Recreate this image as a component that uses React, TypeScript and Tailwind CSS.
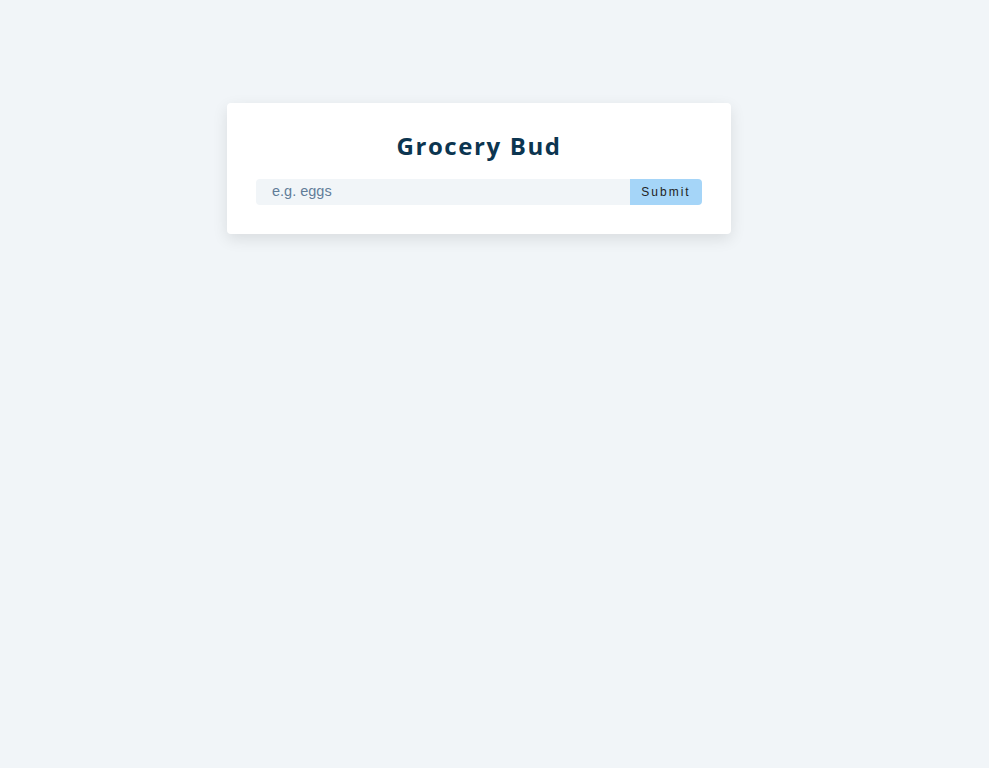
import { useState } from "react";

export default function App() {
  const [name, setName] = useState("");

  return (
    <main className="min-h-screen w-full bg-[#f1f5f8] pt-[103px]">
      <section className="ml-[227px] w-[504px] rounded bg-white px-[29px] pt-[25px] pb-[29px] shadow-[0_5px_15px_rgba(0,0,0,0.1)]">
        <form
          className="flex flex-col"
          onSubmit={(e) => {
            e.preventDefault();
          }}
        >
          <h3
            className="mb-[15px] text-center text-[24px] leading-[36px] font-bold tracking-[1.6px] text-[#0c3550]"
            style={{ fontFamily: '"Open Sans", "Noto Sans", sans-serif' }}
          >
            Grocery Bud
          </h3>
          <div className="flex h-[26px]">
            <input
              type="text"
              value={name}
              onChange={(e) => setName(e.target.value)}
              placeholder="e.g. eggs"
              className="flex-1 rounded-l bg-[#f1f5f8] pl-[16px] text-[14.5px] text-[#324d67] outline-none placeholder:text-[#617d98]"
              style={{ fontFamily: '"Liberation Sans", Arial, sans-serif' }}
            />
            <button
              type="submit"
              className="w-[72px] rounded-r bg-[#a5d5f8] text-[12px] tracking-[2px] text-[#222]"
              style={{ fontFamily: '"Liberation Sans", Arial, sans-serif' }}
            >
              Submit
            </button>
          </div>
        </form>
      </section>
    </main>
  );
}
